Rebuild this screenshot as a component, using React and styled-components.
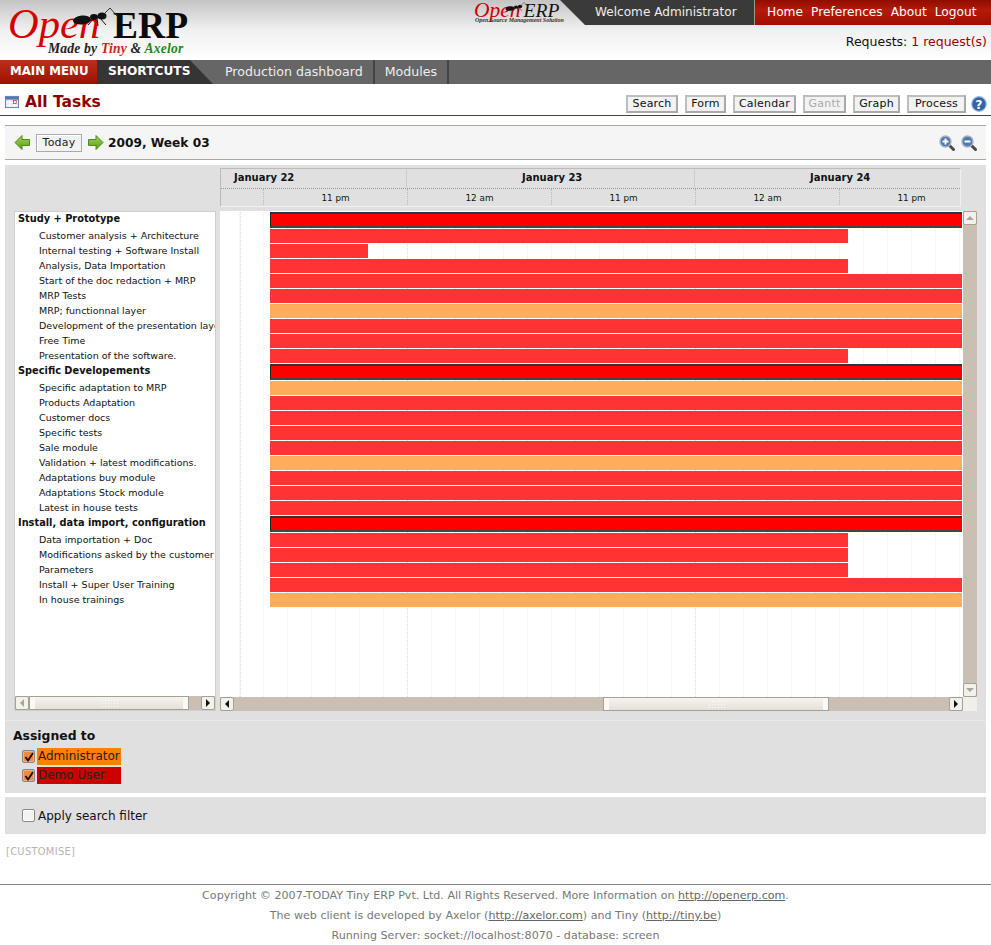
import React from "react";
import styled, { createGlobalStyle } from "styled-components";

const FULL = 692;
const LONG = 578;

const groups = [
  {
    name: "Study + Prototype",
    tasks: [
      ["Customer analysis + Architecture", LONG],
      ["Internal testing + Software Install", 98],
      ["Analysis, Data Importation", LONG],
      ["Start of the doc redaction + MRP", FULL],
      ["MRP Tests", FULL],
      ["MRP; functionnal layer", FULL, true],
      ["Development of the presentation layer", FULL],
      ["Free Time", FULL],
      ["Presentation of the software.", LONG],
    ],
  },
  {
    name: "Specific Developements",
    tasks: [
      ["Specific adaptation to MRP", FULL, true],
      ["Products Adaptation", FULL],
      ["Customer docs", FULL],
      ["Specific tests", FULL],
      ["Sale module", FULL],
      ["Validation + latest modifications.", FULL, true],
      ["Adaptations buy module", FULL],
      ["Adaptations Stock module", FULL],
      ["Latest in house tests", FULL],
    ],
  },
  {
    name: "Install, data import, configuration",
    tasks: [
      ["Data importation + Doc", LONG],
      ["Modifications asked by the customer", LONG],
      ["Parameters", LONG],
      ["Install + Super User Training", FULL],
      ["In house trainings", FULL, true],
    ],
  },
];

const GlobalStyle = createGlobalStyle`
  html, body {
    margin: 0;
    padding: 0;
    background: #fff;
    overflow: hidden;
  }
  body {
    font-family: "DejaVu Sans", sans-serif;
    font-size: 12px;
    color: #111;
  }
`;

const Page = styled.div`
  width: 991px;
  height: 945px;
  overflow: hidden;
`;

const Header = styled.header`
  height: 60px;
  display: flex;
  justify-content: space-between;
  background: linear-gradient(#c4c4c4 0, #f0f0f0 30px, #fff 60px);
`;

const Logo = styled.div`
  position: relative;
  width: 200px;
  padding: 2px 0 0 8px;
  box-sizing: border-box;
  font-family: "Liberation Serif", serif;
`;

const LogoLine = styled.div`
  height: 39px;
  line-height: 44px;
  white-space: nowrap;
`;

const LogoOpen = styled.span`
  font-size: 42.5px;
  font-style: italic;
  color: #d40000;
`;

const LogoErp = styled.span`
  font-size: 37.5px;
  font-weight: bold;
  color: #0c0c0c;
  margin-left: 13px;
`;

const LogoTag = styled.div`
  padding-left: 40px;
  font-size: 13.6px;
  font-weight: bold;
  font-style: italic;
  letter-spacing: 0.2px;
  line-height: 16px;
  color: #222;
  white-space: nowrap;
`;

const Tint = styled.span`
  color: ${(p) => p.$color};
`;

const Ant = styled.svg`
  position: absolute;
  pointer-events: none;
`;

const HeaderSide = styled.div`
  width: 517px;
  display: flex;
  flex-direction: column;
`;

const TopBar = styled.div`
  height: 25px;
  display: flex;
`;

const SmallLogo = styled.div`
  position: relative;
  width: 86px;
  font-family: "Liberation Serif", serif;
  font-style: italic;
  white-space: nowrap;
`;

const SmallName = styled.div`
  height: 17px;
  line-height: 20px;
  font-size: 21.5px;
`;

const SmallErp = styled.span`
  color: #111;
  margin-left: 3px;
  font-size: 19.5px;
`;

const SmallTag = styled.div`
  font-size: 6px;
  font-weight: bold;
  line-height: 7px;
  padding-left: 1px;
  color: #333;
`;

const Diagonal = styled.div`
  width: 25px;
  background: #3a3a3a;
  clip-path: polygon(0 0, 100% 0, 100% 100%);
`;

const Welcome = styled.div`
  width: 170px;
  background: #3a3a3a;
  color: #eee;
  font-size: 12.1px;
  line-height: 25px;
  padding-left: 10px;
  box-sizing: border-box;
  border-right: 1px solid #999;
`;

const TopMenu = styled.nav`
  flex: 1;
  display: flex;
  gap: 8px;
  padding-left: 12px;
  background: linear-gradient(#8f0d00, #b51a0a 40%, #a00d00);
  line-height: 25px;
`;

const TopLink = styled.a`
  color: #fff;
  font-size: 12.2px;
`;

const Requests = styled.div`
  text-align: right;
  padding: 9px 4px 0 0;
  font-size: 12.5px;
  line-height: 16px;
`;

const RequestLink = styled.a`
  color: #990000;
`;

const NavBar = styled.nav`
  height: 24px;
  display: flex;
  background: #666;
  color: #eee;
  line-height: 23px;
`;

const MainMenu = styled.div`
  width: 97px;
  box-sizing: border-box;
  padding-left: 10px;
  background: linear-gradient(#b9301a, #a01000);
  color: #fff;
  font-size: 11.8px;
  font-weight: bold;
`;

const Shortcuts = styled.div`
  width: 93px;
  box-sizing: border-box;
  padding-left: 11px;
  background: #353535;
  color: #fff;
  font-size: 12.2px;
  font-weight: bold;
  white-space: nowrap;
`;

const NavCorner = styled.div`
  width: 23px;
  background: #353535;
  clip-path: polygon(0 0, 100% 100%, 0 100%);
`;

const NavItem = styled.a`
  padding: 0 10px;
  font-size: 12.6px;
  border-right: 2px solid #444;
  white-space: nowrap;
  &:first-of-type {
    padding-left: 12px;
  }
`;

const TitleBar = styled.div`
  height: 23px;
  display: flex;
  align-items: center;
  padding: 8px 4px 0 5px;
  border-bottom: 1px solid #444;
`;

const TitleIcon = styled.svg`
  margin-bottom: 4px;
`;

const PageTitle = styled.h1`
  flex: 1;
  margin: 0 0 4px 6px;
  font-size: 15.5px;
  font-weight: bold;
  color: #8b0000;
`;

const ViewButtons = styled.div`
  display: flex;
  align-items: center;
  gap: 7px;
`;

const ViewButton = styled.button`
  height: 18px;
  width: ${(p) => p.$w}px;
  padding: 0;
  font-family: "DejaVu Sans", sans-serif;
  font-size: 11px;
  line-height: 14px;
  letter-spacing: 0.2px;
  color: ${(p) => (p.disabled ? "#aaa" : "#111")};
  background: #f2f2f2;
  border: 2px solid #bdbdbd;
  border-right-color: #a8a8a8;
  border-bottom-color: #a8a8a8;
`;

const HelpWrap = styled.span`
  display: flex;
  margin-left: -2px;
`;

const Main = styled.main`
  padding: 9px 5px 0;
`;

const Toolbar = styled.div`
  height: 33px;
  display: flex;
  align-items: center;
  padding: 0 9px;
  background: #f5f5f5;
  border-top: 1px solid #aaa9a0;
  border-bottom: 1px solid #aaa9a0;
`;

const TodayButton = styled.button`
  width: 46px;
  height: 18px;
  margin: 0 5px;
  padding: 0;
  font-family: "DejaVu Sans", sans-serif;
  font-size: 11px;
  letter-spacing: 0.2px;
  color: #222;
  background: #f2f2f2;
  border: 1px solid #aaa;
  box-shadow: inset 1px 1px 0 #fff;
`;

const WeekLabel = styled.div`
  flex: 1;
  margin-left: 4px;
  font-size: 12.2px;
  font-weight: bold;
`;

const ZoomIcons = styled.div`
  display: flex;
  gap: 6px;
`;

const Panel = styled.section`
  margin-top: 5px;
  height: 628px;
  box-sizing: border-box;
  padding-top: 3px;
  background: #e0e0e0;
`;

const TimelineHead = styled.div`
  width: 741px;
  height: 39px;
  margin-left: 215px;
  box-sizing: border-box;
  overflow: hidden;
  background: #e0e0e0;
  border: 1px solid #bbb;
  border-right-color: #f0f0f0;
  border-bottom-color: #f0f0f0;
`;

const DayRow = styled.div`
  height: 19px;
  display: flex;
  border-bottom: 1px dotted #999;
  font-size: 10px;
  font-weight: bold;
  line-height: 18px;
`;

const DayCell = styled.div`
  flex: none;
  width: ${(p) => p.$w}px;
  box-sizing: border-box;
  padding-left: ${(p) => p.$pad}px;
  border-left: ${(p) => (p.$first ? "0" : "1px solid #ccc")};
`;

const HourRow = styled.div`
  display: flex;
  height: 18px;
  font-size: 8.8px;
  line-height: 18px;
`;

const HourCell = styled.div`
  flex: none;
  width: ${(p) => p.$w}px;
  box-sizing: border-box;
  text-align: center;
  border-left: ${(p) => (p.$first ? "0" : "1px dotted #bbb")};
`;

const ChartRow = styled.div`
  display: flex;
  margin-top: 4px;
  padding-left: 9px;
  gap: 4px;
`;

const TreeBox = styled.div`
  width: 202px;
  height: 500px;
  display: flex;
  flex-direction: column;
  background: #fff;
  box-sizing: border-box;
  border: 1px solid #cfcfcf;
`;

const TreeList = styled.div`
  flex: 1;
  overflow: hidden;
`;

const TreeGroup = styled.div`
  height: 17px;
  line-height: 14px;
  padding-left: 3px;
  font-size: 9.8px;
  font-weight: bold;
  white-space: nowrap;
`;

const TreeTask = styled.div`
  height: 15px;
  line-height: 13px;
  padding-left: 24px;
  font-size: 9.5px;
  white-space: nowrap;
`;

const ChartBox = styled.div`
  display: grid;
  grid-template-columns: 743px 14px;
  grid-template-rows: 486px 14px;
  width: 757px;
  height: 500px;
`;

const BarArea = styled.div`
  overflow: hidden;
  padding-top: 1px;
  box-sizing: border-box;
  background-color: #fff;
  background-image: repeating-linear-gradient(to bottom, #fff 0 1px, transparent 1px 2px),
    repeating-linear-gradient(to right, #dcdcdc 0 1px, transparent 1px 288px),
    repeating-linear-gradient(to right, #ececec 0 1px, transparent 1px 24px);
  background-position: 0 0, 187px 0, 19px 0;
`;

const BarRow = styled.div`
  height: ${(p) => (p.$group ? 17 : 15)}px;
  padding-left: 50px;
`;

const GroupBar = styled.div`
  width: ${FULL}px;
  height: 16px;
  box-sizing: border-box;
  background: #ff0000;
  border-top: 2px solid #333;
  border-bottom: 2px solid #444;
  border-left: 1px solid #222;
`;

const TaskBar = styled.div`
  width: ${(p) => p.$w}px;
  height: 14px;
  background: ${(p) => (p.$pending ? "#ffad5c" : "#ff3333")};
`;

const Track = styled.div`
  display: flex;
  flex-direction: ${(p) => (p.$vertical ? "column" : "row")};
  background: #c9bfb3;
  box-sizing: border-box;
  ${(p) => (p.$vertical ? "height: 486px; width: 14px;" : "height: 14px;")}
`;

const ArrowButton = styled.div`
  flex: none;
  width: 14px;
  height: 14px;
  display: flex;
  align-items: center;
  justify-content: center;
  box-sizing: border-box;
  background: #f3f1ec;
  border: 1px solid #a89f93;
  border-radius: 2px;
`;

const Arrow = styled.span`
  width: 0;
  height: 0;
  border: 4px solid transparent;
  ${(p) => {
    const color = p.$dim ? "#aaa59c" : "#111";
    if (p.$dir === "left") return `border-left: 0; border-right-color: ${color};`;
    if (p.$dir === "right") return `border-right: 0; border-left-color: ${color};`;
    if (p.$dir === "up") return `border-top: 0; border-bottom-color: ${color};`;
    return `border-bottom: 0; border-top-color: ${color};`;
  }}
`;

const TrackFill = styled.div`
  flex: ${(p) => (p.$w ? `none` : 1)};
  width: ${(p) => (p.$w ? `${p.$w}px` : "auto")};
`;

const Thumb = styled.div`
  flex: none;
  width: ${(p) => p.$w}px;
  display: flex;
  align-items: center;
  justify-content: center;
  box-sizing: border-box;
  background: linear-gradient(#f6f4f0, #e4e0d9);
  border: 1px solid #a89f93;
  box-shadow: inset 5px 0 0 #faf9f6, inset -5px 0 0 #faf9f6;
`;

const Grip = styled.span`
  width: 17px;
  height: 8px;
  background-image: radial-gradient(#fff 40%, transparent 45%);
  background-size: 3px 3px;
  opacity: 0.9;
`;

const Corner = styled.div`
  background: #f1efe9;
`;

const Assigned = styled.div`
  margin-top: 9px;
  padding: 6px 0 0 8px;
  border-top: 1px solid #e8e8e8;
`;

const AssignedTitle = styled.div`
  font-size: 12.4px;
  font-weight: bold;
  line-height: 17px;
  margin-bottom: 3px;
`;

const UserRow = styled.label`
  display: flex;
  align-items: center;
  gap: 2px;
  height: 19px;
  padding-left: 9px;
  font-size: 12px;
`;

const CheckMark = styled.span`
  width: 11px;
  height: 11px;
  display: flex;
  align-items: center;
  justify-content: center;
  border: 1px solid #888;
  border-radius: 2px;
  background: ${(p) => (p.$on ? "#f08a40" : "#f4f4f4")};
  box-shadow: inset 0 0 0 1px ${(p) => (p.$on ? "#f6b080" : "#fff")};
`;

const UserTag = styled.span`
  width: 84px;
  height: 17px;
  line-height: 17px;
  box-sizing: border-box;
  padding-left: 1px;
  background: ${(p) => p.$color};
  color: #222;
  white-space: nowrap;
`;

const FilterBar = styled.div`
  margin-top: 4px;
  height: 37px;
  display: flex;
  align-items: center;
  gap: 3px;
  padding-left: 17px;
  background: #e0e0e0;
  font-size: 12px;
`;

const Customise = styled.div`
  margin-top: 11px;
  padding-left: 1px;
  height: 14px;
  line-height: 14px;
  font-size: 9.9px;
  color: #b5b5b5;
  letter-spacing: 0.3px;
`;

const Footer = styled.footer`
  margin-top: 25px;
  border-top: 1px solid #888;
  padding-top: 1px;
  text-align: center;
  font-size: 11.1px;
  line-height: 20px;
  color: #777;
  border-bottom: 1px solid #eee;
`;

const FooterLink = styled.a`
  color: #666;
  text-decoration: underline;
`;

function CalendarIcon() {
  return (
    <TitleIcon width="14" height="14" viewBox="0 0 15 15">
      <rect x="0.5" y="1.5" width="14" height="12" fill="#dfe7f2" stroke="#5b7ba8" />
      <rect x="1" y="2" width="13" height="3" fill="#4f78b0" />
      <path d="M1 8h13M1 11h13M5 5v8M10 5v8" stroke="#fff" />
      <rect x="9" y="6" width="3" height="3" fill="#fff" stroke="#b03030" strokeWidth="0.8" />
    </TitleIcon>
  );
}

function GreenArrow({ flip }) {
  return (
    <svg width="17" height="17" viewBox="0 0 17 17">
      <defs>
        <linearGradient id="arrowFill" x1="0" y1="0" x2="0" y2="1">
          <stop offset="0" stopColor="#a6d45c" />
          <stop offset="1" stopColor="#559a18" />
        </linearGradient>
      </defs>
      <path
        d={flip ? "M9 1.5 L16 8.5 L9 15.5 V11.5 H1.5 V5.5 H9 Z" : "M8 1.5 L1 8.5 L8 15.5 V11.5 H15.5 V5.5 H8 Z"}
        fill="url(#arrowFill)"
        stroke="#4d8c17"
        strokeWidth="1"
        strokeLinejoin="round"
      />
    </svg>
  );
}

function Magnifier({ plus }) {
  return (
    <svg width="16" height="16" viewBox="0 0 16 16">
      <path d="M9.5 9.5 L14.5 14.5" stroke="#4a4a44" strokeWidth="3" strokeLinecap="round" />
      <circle cx="6.5" cy="6.5" r="5.5" fill="#4f79b5" stroke="#aab4bf" strokeWidth="1.4" />
      <path d="M3.5 6.5 H9.5" stroke="#fff" strokeWidth="2" />
      {plus && <path d="M6.5 3.5 V9.5" stroke="#fff" strokeWidth="2" />}
    </svg>
  );
}

function HelpIcon() {
  return (
    <svg width="16" height="16" viewBox="0 0 16 16">
      <circle cx="8" cy="8" r="7.3" fill="#2f66ab" stroke="#9db9da" strokeWidth="1.2" />
      <text x="8" y="12.5" textAnchor="middle" fontSize="12.5" fontWeight="bold" fontFamily="DejaVu Sans" fill="#fff">
        ?
      </text>
    </svg>
  );
}

function AntShape({ left, top, scale }) {
  return (
    <Ant style={{ left, top }} width={46 * scale} height={20 * scale} viewBox="0 0 46 20">
      <ellipse cx="10" cy="13" rx="9" ry="4.5" fill="#111" transform="rotate(-6 10 13)" />
      <ellipse cx="22" cy="10" rx="4" ry="3" fill="#111" />
      <ellipse cx="30" cy="9" rx="4.5" ry="3.5" fill="#111" />
      <path d="M32 7 L38 1 L45 9" fill="none" stroke="#222" strokeWidth="0.9" />
      <path d="M22 11 L16 18 M25 11 L26 19 M28 11 L34 18" stroke="#111" strokeWidth="1" fill="none" />
    </Ant>
  );
}

function Check({ on }) {
  return (
    <CheckMark $on={on}>
      {on && (
        <svg width="10" height="10" viewBox="0 0 10 10">
          <path d="M1.5 5 L4 8.5 L9 1" fill="none" stroke="#111" strokeWidth="1.8" />
        </svg>
      )}
    </CheckMark>
  );
}

export default function App() {
  return (
    <Page>
      <GlobalStyle />
      <Header>
        <Logo>
          <LogoLine>
            <LogoOpen>Open</LogoOpen>
            <LogoErp>ERP</LogoErp>
          </LogoLine>
          <LogoTag>
            Made by <Tint $color="#d02020">Tiny</Tint> &amp; <Tint $color="#1a8a1a">Axelor</Tint>
          </LogoTag>
          <AntShape left={72} top={7} scale={1} />
        </Logo>
        <HeaderSide>
          <TopBar>
            <SmallLogo>
              <SmallName>
                <Tint $color="#cc0000">Open</Tint>
                <SmallErp>ERP</SmallErp>
              </SmallName>
              <SmallTag>Open Source Management Solution</SmallTag>
              <AntShape left={31} top={2} scale={0.5} />
            </SmallLogo>
            <Diagonal />
            <Welcome>Welcome Administrator</Welcome>
            <TopMenu>
              <TopLink>Home</TopLink>
              <TopLink>Preferences</TopLink>
              <TopLink>About</TopLink>
              <TopLink>Logout</TopLink>
            </TopMenu>
          </TopBar>
          <Requests>
            Requests: <RequestLink>1 request(s)</RequestLink>
          </Requests>
        </HeaderSide>
      </Header>

      <NavBar>
        <MainMenu>MAIN MENU</MainMenu>
        <Shortcuts>SHORTCUTS</Shortcuts>
        <NavCorner />
        <NavItem>Production dashboard</NavItem>
        <NavItem>Modules</NavItem>
      </NavBar>

      <TitleBar>
        <CalendarIcon />
        <PageTitle>All Tasks</PageTitle>
        <ViewButtons>
          <ViewButton $w={52}>Search</ViewButton>
          <ViewButton $w={41}>Form</ViewButton>
          <ViewButton $w={63}>Calendar</ViewButton>
          <ViewButton $w={43} disabled>Gantt</ViewButton>
          <ViewButton $w={47}>Graph</ViewButton>
          <ViewButton $w={59}>Process</ViewButton>
          <HelpWrap>
            <HelpIcon />
          </HelpWrap>
        </ViewButtons>
      </TitleBar>

      <Main>
        <Toolbar>
          <GreenArrow />
          <TodayButton>Today</TodayButton>
          <GreenArrow flip />
          <WeekLabel>2009, Week 03</WeekLabel>
          <ZoomIcons>
            <Magnifier plus />
            <Magnifier />
          </ZoomIcons>
        </Toolbar>

        <Panel>
          <TimelineHead>
            <DayRow>
              <DayCell $w={185} $pad={13} $first>January 22</DayCell>
              <DayCell $w={288} $pad={115}>January 23</DayCell>
              <DayCell $w={288} $pad={115}>January 24</DayCell>
            </DayRow>
            <HourRow>
              <HourCell $w={42} $first />
              <HourCell $w={144}>11 pm</HourCell>
              <HourCell $w={144}>12 am</HourCell>
              <HourCell $w={144}>11 pm</HourCell>
              <HourCell $w={144}>12 am</HourCell>
              <HourCell $w={144}>11 pm</HourCell>
            </HourRow>
          </TimelineHead>

          <ChartRow>
            <TreeBox>
              <TreeList>
                {groups.map((g) => (
                  <React.Fragment key={g.name}>
                    <TreeGroup>{g.name}</TreeGroup>
                    {g.tasks.map(([name]) => (
                      <TreeTask key={name}>{name}</TreeTask>
                    ))}
                  </React.Fragment>
                ))}
              </TreeList>
              <Track>
                <ArrowButton><Arrow $dir="left" $dim /></ArrowButton>
                <Thumb $w={160}><Grip /></Thumb>
                <TrackFill />
                <ArrowButton><Arrow $dir="right" /></ArrowButton>
              </Track>
            </TreeBox>

            <ChartBox>
              <BarArea>
                {groups.map((g) => (
                  <React.Fragment key={g.name}>
                    <BarRow $group><GroupBar /></BarRow>
                    {g.tasks.map(([name, width, pending]) => (
                      <BarRow key={name}>
                        <TaskBar $w={width} $pending={pending} />
                      </BarRow>
                    ))}
                  </React.Fragment>
                ))}
              </BarArea>
              <Track $vertical>
                <ArrowButton><Arrow $dir="up" $dim /></ArrowButton>
                <TrackFill />
                <ArrowButton><Arrow $dir="down" $dim /></ArrowButton>
              </Track>
              <Track>
                <ArrowButton><Arrow $dir="left" /></ArrowButton>
                <TrackFill $w={369} />
                <Thumb $w={226}><Grip /></Thumb>
                <TrackFill />
                <ArrowButton><Arrow $dir="right" /></ArrowButton>
              </Track>
              <Corner />
            </ChartBox>
          </ChartRow>

          <Assigned>
            <AssignedTitle>Assigned to</AssignedTitle>
            <UserRow>
              <Check on />
              <UserTag $color="#ff7f00">Administrator</UserTag>
            </UserRow>
            <UserRow>
              <Check on />
              <UserTag $color="#cc0000">Demo User</UserTag>
            </UserRow>
          </Assigned>
        </Panel>

        <FilterBar>
          <Check />
          Apply search filter
        </FilterBar>

        <Customise>[CUSTOMISE]</Customise>
      </Main>

      <Footer>
        <div>
          Copyright © 2007-TODAY Tiny ERP Pvt. Ltd. All Rights Reserved. More Information on{" "}
          <FooterLink>http://openerp.com</FooterLink>.
        </div>
        <div>
          The web client is developed by Axelor (<FooterLink>http://axelor.com</FooterLink>) and Tiny (
          <FooterLink>http://tiny.be</FooterLink>)
        </div>
        <div>Running Server: socket://localhost:8070 - database: screen</div>
      </Footer>
    </Page>
  );
}
